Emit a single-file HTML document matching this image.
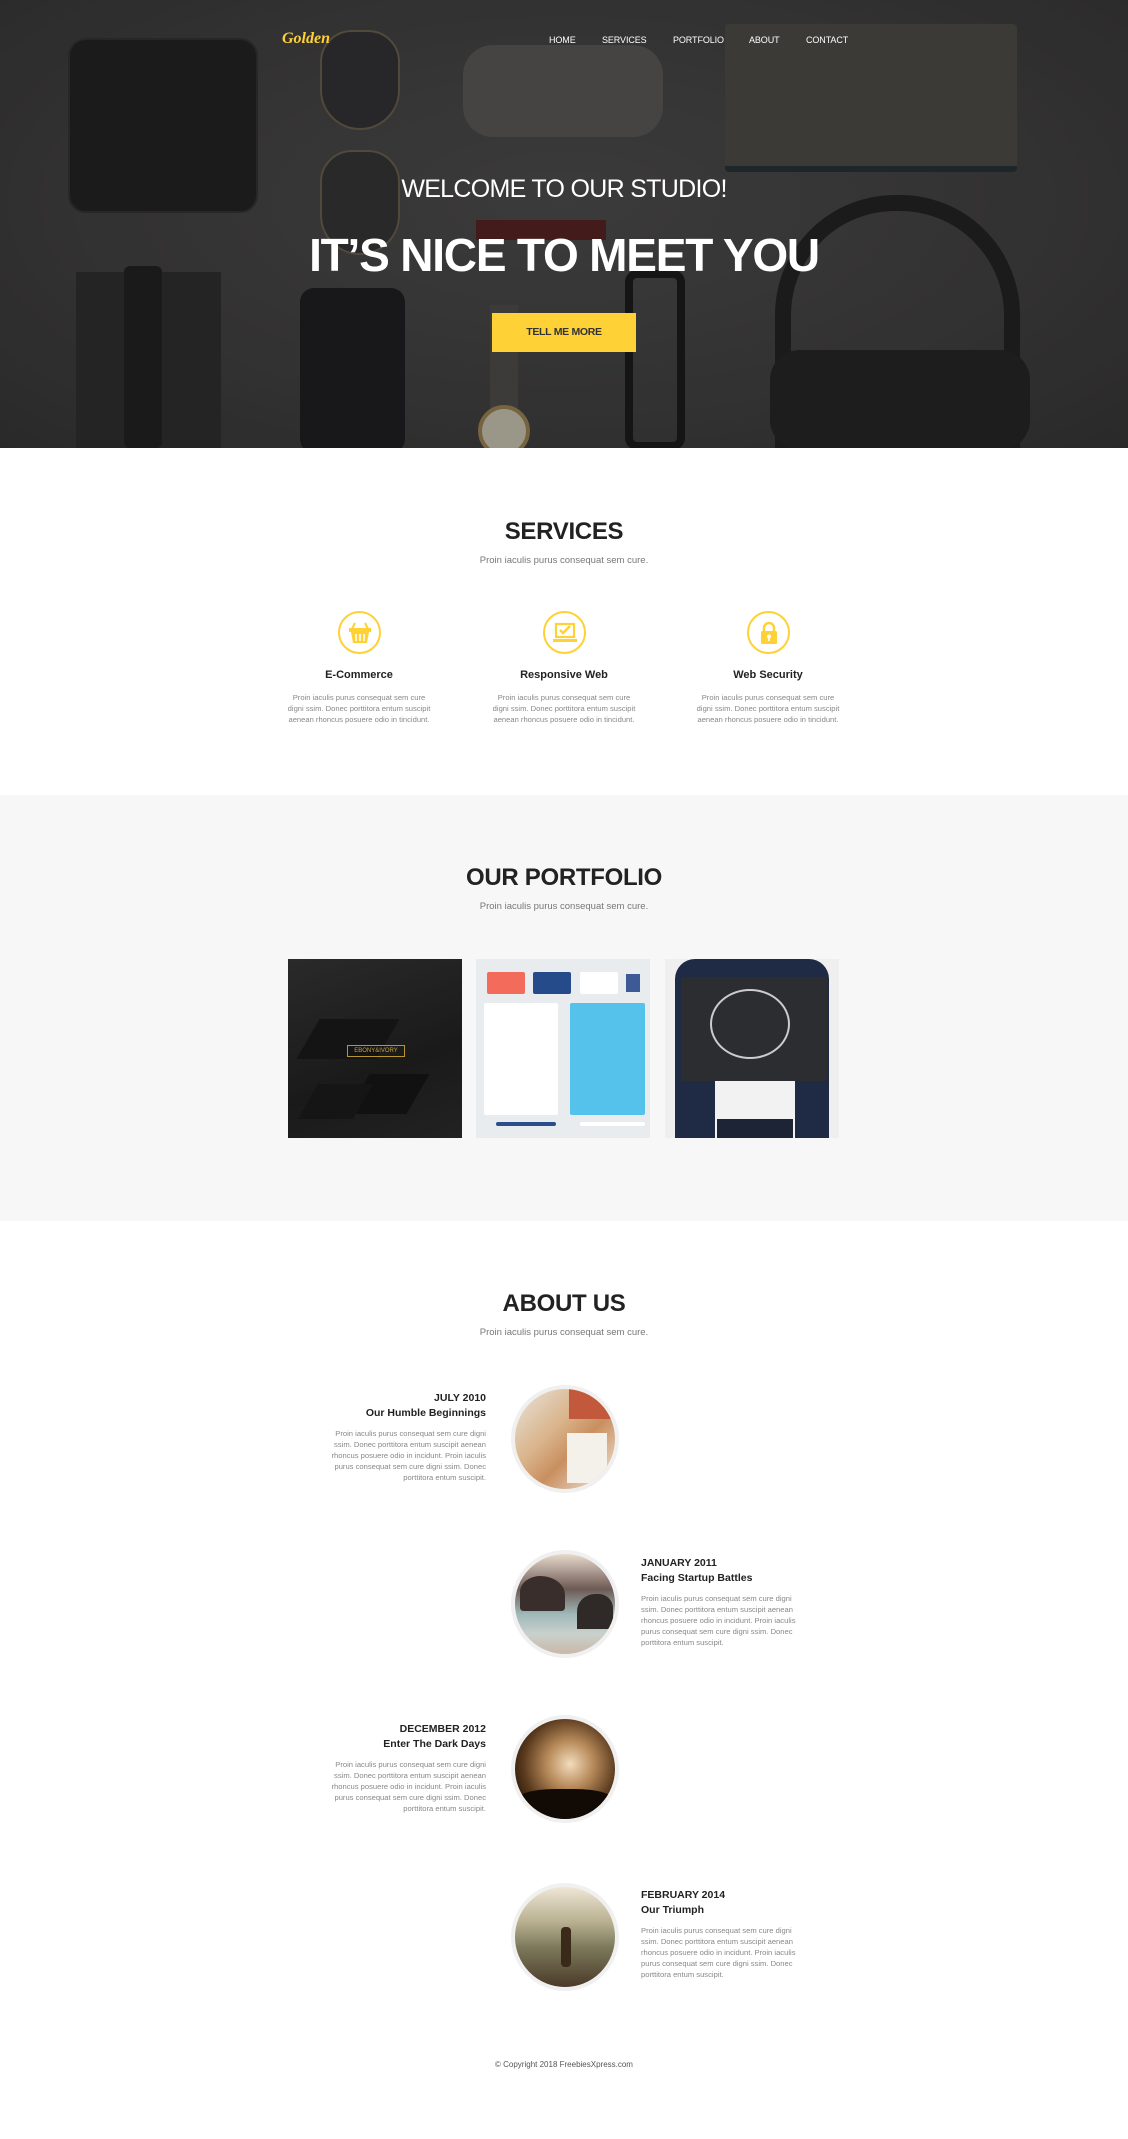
<!DOCTYPE html>
<html><head><meta charset="utf-8"><style>
*{margin:0;padding:0;box-sizing:border-box}
body{width:1128px;height:2139px;position:relative;background:#fff;font-family:"Liberation Sans",Arial,sans-serif;overflow:hidden}
.a{position:absolute}
.c{position:absolute;left:0;right:0;text-align:center}
.hero{left:0;top:0;width:1128px;height:448px;background:radial-gradient(ellipse at 50% 45%,#434242 0%,#393838 55%,#2e2d2d 100%);overflow:hidden}
.nav{top:35px;font-size:9px;color:#fff;letter-spacing:-.1px}
h2{font-size:24px;font-weight:bold;color:#222;letter-spacing:-.3px}
.sub{font-size:9.5px;color:#777}
.sh{font-size:11px;font-weight:bold;color:#222}
.st{font-size:7.6px;line-height:11px;color:#888;width:150px;text-align:center}
.ic{width:43px;height:43px;border:2px solid #fed136;border-radius:50%;display:flex;align-items:center;justify-content:center}
.pf{top:959px;width:174px;height:179px;overflow:hidden}
.circ{width:108px;height:108px;border-radius:50%;border:4px solid #f0f0f0;overflow:hidden;left:511px}
.tl{width:162px;font-size:7.6px;line-height:11px;color:#888}
.tl b{display:block;font-size:10.5px;color:#222;line-height:15px}
.tl p{margin-top:7px}
.r{left:324px;text-align:right}
.l{left:641px;text-align:left}
</style></head><body>

<div class="a hero">
  <div class="a" style="left:68px;top:38px;width:190px;height:175px;background:#1c1c1d;border-radius:18px;border:2px solid #2a2a2a"></div>
  <div class="a" style="left:320px;top:30px;width:80px;height:100px;border:2px solid #5e5444;border-radius:40px 40px 50px 50px;background:#2a2a2c"></div>
  <div class="a" style="left:320px;top:150px;width:80px;height:105px;border:2px solid #5e5444;border-radius:40px 40px 50px 50px;background:#2c2c2e"></div>
  <div class="a" style="left:463px;top:45px;width:200px;height:92px;background:#4f4e4c;border-radius:30px"></div>
  <div class="a" style="left:725px;top:24px;width:292px;height:148px;background:#44413e;border-radius:4px;border-bottom:6px solid #1e2a2c"></div>
  <div class="a" style="left:476px;top:220px;width:130px;height:20px;background:#4e1c1c"></div>
  <div class="a" style="left:76px;top:272px;width:145px;height:176px;background:#262627"></div>
  <div class="a" style="left:124px;top:266px;width:38px;height:182px;background:#1a1a1a;border-radius:6px"></div>
  <div class="a" style="left:300px;top:288px;width:105px;height:165px;background:#18181b;border-radius:14px"></div>
  <div class="a" style="left:490px;top:305px;width:28px;height:110px;background:#444240"></div>
  <div class="a" style="left:478px;top:405px;width:52px;height:52px;background:#b8b2a0;border-radius:50%;border:4px solid #8a7448"></div>
  <div class="a" style="left:625px;top:270px;width:60px;height:180px;border:8px solid #141414;border-radius:12px"></div>
  <div class="a" style="left:775px;top:195px;width:245px;height:300px;border:16px solid #1b1b1c;border-radius:120px 120px 40px 40px"></div>
  <div class="a" style="left:770px;top:350px;width:260px;height:100px;background:#1e1e1f;border-radius:30px"></div>
  <div class="a" style="left:0;top:0;width:1128px;height:448px;background:rgba(30,30,30,.18)"></div>
  <div class="a" style="left:282px;top:30px;font-family:'Liberation Serif',serif;font-style:italic;font-weight:bold;font-size:16px;color:#fed136">Golden</div>
  <div class="a nav" style="left:549px">HOME</div>
  <div class="a nav" style="left:602px">SERVICES</div>
  <div class="a nav" style="left:673px">PORTFOLIO</div>
  <div class="a nav" style="left:749px">ABOUT</div>
  <div class="a nav" style="left:806px">CONTACT</div>
  <div class="c" style="top:175px;font-size:25px;color:#fff;letter-spacing:-.7px">WELCOME TO OUR STUDIO!</div>
  <div class="c" style="top:228px;font-size:46px;font-weight:bold;color:#fff;letter-spacing:-1.2px">IT’S NICE TO MEET YOU</div>
  <div class="a" style="left:492px;top:313px;width:144px;height:39px;background:#fed136;color:#333;font-size:10.5px;font-weight:bold;text-align:center;line-height:39px;letter-spacing:-.3px">TELL ME MORE</div>
</div>

<div class="c" style="top:518px"><h2>SERVICES</h2></div>
<div class="c sub" style="top:555px">Proin iaculis purus consequat sem cure.</div>

<div class="a ic" style="left:338px;top:611px"><svg width="24" height="22" viewBox="0 0 24 22"><path d="M7 1 L4 7 M17 1 L20 7" stroke="#fed136" stroke-width="2" fill="none"/><rect x="1" y="6" width="22" height="4" fill="#fed136"/><path d="M3 10 H21 L19 21 H5 Z" fill="#fed136"/><path d="M8 12 V19 M12 12 V19 M16 12 V19" stroke="#fff" stroke-width="1.5"/></svg></div>
<div class="a ic" style="left:543px;top:611px"><svg width="24" height="22" viewBox="0 0 24 22"><rect x="3" y="2" width="18" height="13" fill="none" stroke="#fed136" stroke-width="2.2"/><path d="M7 8 L10 11 L17 4" stroke="#fed136" stroke-width="2.4" fill="none"/><rect x="0" y="17" width="24" height="3" fill="#fed136"/></svg></div>
<div class="a ic" style="left:747px;top:611px"><svg width="20" height="24" viewBox="0 0 20 24"><path d="M5 11 V7 A5 5 0 0 1 15 7 V11" stroke="#fed136" stroke-width="2.5" fill="none"/><rect x="2" y="10" width="16" height="13" rx="1.5" fill="#fed136"/><circle cx="10" cy="15.5" r="2" fill="#fff"/><rect x="9.2" y="16" width="1.6" height="4" fill="#fff"/></svg></div>

<div class="a sh" style="left:259px;width:200px;text-align:center;top:669px">E-Commerce</div>
<div class="a sh" style="left:464px;width:200px;text-align:center;top:669px">Responsive Web</div>
<div class="a sh" style="left:668px;width:200px;text-align:center;top:669px">Web Security</div>
<div class="a st" style="left:284px;top:692px">Proin iaculis purus consequat sem cure digni ssim. Donec porttitora entum suscipit aenean rhoncus posuere odio in tincidunt.</div>
<div class="a st" style="left:489px;top:692px">Proin iaculis purus consequat sem cure digni ssim. Donec porttitora entum suscipit aenean rhoncus posuere odio in tincidunt.</div>
<div class="a st" style="left:693px;top:692px">Proin iaculis purus consequat sem cure digni ssim. Donec porttitora entum suscipit aenean rhoncus posuere odio in tincidunt.</div>

<div class="a" style="left:0;top:795px;width:1128px;height:426px;background:#f7f7f7"></div>
<div class="c" style="top:864px"><h2>OUR PORTFOLIO</h2></div>
<div class="c sub" style="top:901px">Proin iaculis purus consequat sem cure.</div>

<div class="a pf" style="left:288px;background:linear-gradient(160deg,#2a2a2a,#1a1a1a 60%,#222)">
  <div class="a" style="left:20px;top:60px;width:80px;height:40px;background:#141414;transform:skewX(-30deg)"></div>
  <div class="a" style="left:70px;top:115px;width:60px;height:40px;background:#111;transform:skewX(-30deg)"></div>
  <div class="a" style="left:20px;top:125px;width:55px;height:35px;background:#151515;transform:skewX(-30deg)"></div>
  <div class="a" style="left:59px;top:86px;width:58px;height:12px;border:1px solid #b8952e;color:#c9a23a;font-size:6px;line-height:10px;text-align:center">EBONY&amp;IVORY</div>
</div>
<div class="a pf" style="left:476px;background:#e8ecef">
  <div class="a" style="left:11px;top:13px;width:38px;height:22px;background:#f26b5b;border-radius:2px"></div>
  <div class="a" style="left:57px;top:13px;width:38px;height:22px;background:#254b8a;border-radius:2px"></div>
  <div class="a" style="left:104px;top:13px;width:38px;height:22px;background:#fff;border-radius:2px"></div>
  <div class="a" style="left:150px;top:15px;width:14px;height:18px;background:#3d5a96"></div>
  <div class="a" style="left:8px;top:44px;width:74px;height:112px;background:#fff;border-radius:2px"></div>
  <div class="a" style="left:94px;top:44px;width:75px;height:112px;background:#54c2ea;border-radius:2px"></div>
  <div class="a" style="left:20px;top:163px;width:60px;height:4px;background:#2b4d8c;border-radius:2px"></div>
  <div class="a" style="left:104px;top:163px;width:65px;height:4px;background:#fff;border-radius:2px"></div>
</div>
<div class="a pf" style="left:665px;background:#efefef">
  <div class="a" style="left:10px;top:0;width:154px;height:179px;background:#1f2a44;border-radius:20px 20px 0 0"></div>
  <div class="a" style="left:50px;top:110px;width:80px;height:69px;background:#f2f2f2"></div>
  <div class="a" style="left:52px;top:160px;width:76px;height:19px;background:#1d2435"></div>
  <div class="a" style="left:16px;top:18px;width:146px;height:104px;background:#2b2d31"></div>
  <div class="a" style="left:45px;top:30px;width:80px;height:70px;border:2px solid #ccc;border-radius:50%"></div>
</div>

<div class="c" style="top:1290px"><h2>ABOUT US</h2></div>
<div class="c sub" style="top:1327px">Proin iaculis purus consequat sem cure.</div>

<div class="a tl r" style="top:1391px"><b>JULY 2010</b><b>Our Humble Beginnings</b><p>Proin iaculis purus consequat sem cure digni ssim. Donec porttitora entum suscipit aenean rhoncus posuere odio in incidunt. Proin iaculis purus consequat sem cure digni ssim. Donec porttitora entum suscipit.</p></div>
<div class="a circ" style="top:1385px;background:linear-gradient(135deg,#e9e4dc 0%,#d9b38a 40%,#c98f5f 60%,#f1ece5 100%)"><div class="a" style="left:54px;top:0;width:46px;height:30px;background:#c2593d"></div><div class="a" style="left:52px;top:44px;width:40px;height:50px;background:#f4f1ea"></div></div>

<div class="a circ" style="top:1550px;background:linear-gradient(180deg,#e8d9cc 0%,#6d5a55 35%,#9fb8b8 60%,#c9d1cc 80%,#c9b8a8 100%)"><div class="a" style="left:5px;top:22px;width:45px;height:35px;background:#3a2e2c;border-radius:50% 60% 10% 10%"></div><div class="a" style="left:62px;top:40px;width:36px;height:35px;background:#2f2a28;border-radius:50% 40% 0 0"></div></div>
<div class="a tl l" style="top:1556px"><b>JANUARY 2011</b><b>Facing Startup Battles</b><p>Proin iaculis purus consequat sem cure digni ssim. Donec porttitora entum suscipit aenean rhoncus posuere odio in incidunt. Proin iaculis purus consequat sem cure digni ssim. Donec porttitora entum suscipit.</p></div>

<div class="a tl r" style="top:1722px"><b>DECEMBER 2012</b><b>Enter The Dark Days</b><p>Proin iaculis purus consequat sem cure digni ssim. Donec porttitora entum suscipit aenean rhoncus posuere odio in incidunt. Proin iaculis purus consequat sem cure digni ssim. Donec porttitora entum suscipit.</p></div>
<div class="a circ" style="top:1715px;background:radial-gradient(circle at 55% 45%,#f3dcbc 0%,#b78a5a 30%,#5a3a1e 60%,#1a0e06 85%)"><div class="a" style="left:0;top:70px;width:100px;height:30px;background:#120a04;border-radius:40% 40% 0 0"></div></div>

<div class="a circ" style="top:1883px;background:linear-gradient(180deg,#efe6d6 0%,#b8b090 35%,#7d7a5c 60%,#4a3a28 100%)"><div class="a" style="left:46px;top:40px;width:10px;height:40px;background:#3a2a1a;border-radius:4px"></div></div>
<div class="a tl l" style="top:1888px"><b>FEBRUARY 2014</b><b>Our Triumph</b><p>Proin iaculis purus consequat sem cure digni ssim. Donec porttitora entum suscipit aenean rhoncus posuere odio in incidunt. Proin iaculis purus consequat sem cure digni ssim. Donec porttitora entum suscipit.</p></div>

<div class="c" style="top:2060px;font-size:8px;color:#555">© Copyright 2018 FreebiesXpress.com</div>
</body></html>
